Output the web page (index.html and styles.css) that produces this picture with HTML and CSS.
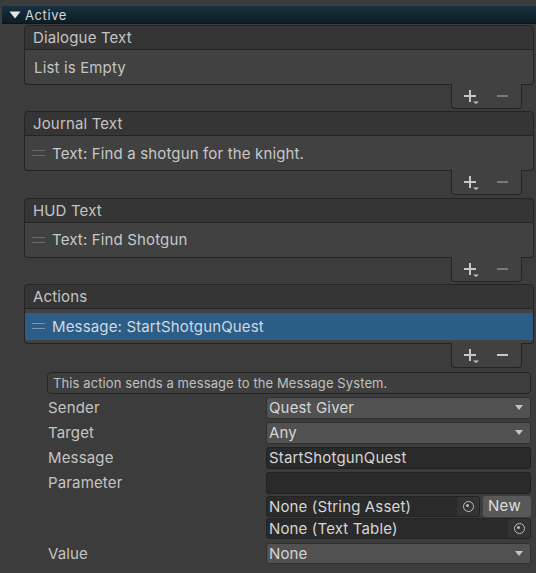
FILE: index.html
```html
<!DOCTYPE html>
<html>
<head>
<meta charset="utf-8">
<link rel="stylesheet" href="styles.css">
</head>
<body>
<div class="panel">
  <div class="foldout">
    <svg class="tri" width="12" height="8" viewBox="0 0 12 8"><path d="M0.5 0.5 L11.5 0.5 L6 7.5 Z" fill="#e6e6e6"/></svg>
    <span class="fold-label">Active</span>
  </div>

  <div class="list">
    <div class="list-head">Dialogue Text</div>
    <div class="list-body"><div class="empty">List is Empty</div></div>
    <div class="list-foot">
      <span class="plus"><svg width="18" height="14" viewBox="0 0 18 14"><rect x="1" y="5" width="12" height="2" fill="#c8c8c8"/><rect x="6" y="0" width="2" height="12" fill="#c8c8c8"/><path d="M10 11.5 L16 11.5 L13 14 Z" fill="#c8c8c8"/></svg></span>
      <span class="minus off"></span>
    </div>
  </div>

  <div class="list">
    <div class="list-head">Journal Text</div>
    <div class="list-body"><div class="item"><span class="handle"></span>Text: Find a shotgun for the knight.</div></div>
    <div class="list-foot">
      <span class="plus"><svg width="18" height="14" viewBox="0 0 18 14"><rect x="1" y="5" width="12" height="2" fill="#c8c8c8"/><rect x="6" y="0" width="2" height="12" fill="#c8c8c8"/><path d="M10 11.5 L16 11.5 L13 14 Z" fill="#c8c8c8"/></svg></span>
      <span class="minus off"></span>
    </div>
  </div>

  <div class="list">
    <div class="list-head">HUD Text</div>
    <div class="list-body"><div class="item"><span class="handle"></span>Text: Find Shotgun</div></div>
    <div class="list-foot">
      <span class="plus"><svg width="18" height="14" viewBox="0 0 18 14"><rect x="1" y="5" width="12" height="2" fill="#c8c8c8"/><rect x="6" y="0" width="2" height="12" fill="#c8c8c8"/><path d="M10 11.5 L16 11.5 L13 14 Z" fill="#c8c8c8"/></svg></span>
      <span class="minus off"></span>
    </div>
  </div>

  <div class="list">
    <div class="list-head">Actions</div>
    <div class="list-body sel-body"><div class="item selected"><span class="handle"></span>Message: StartShotgunQuest</div></div>
    <div class="list-foot">
      <span class="plus"><svg width="18" height="14" viewBox="0 0 18 14"><rect x="1" y="5" width="12" height="2" fill="#c8c8c8"/><rect x="6" y="0" width="2" height="12" fill="#c8c8c8"/><path d="M10 11.5 L16 11.5 L13 14 Z" fill="#c8c8c8"/></svg></span>
      <span class="minus"></span>
    </div>
  </div>

  <div class="details">
    <div class="help">This action sends a message to the Message System.</div>

    <div class="row">
      <div class="label">Sender</div>
      <div class="field dropdown"><span>Quest Giver</span><span class="arrow"></span></div>
    </div>
    <div class="row">
      <div class="label">Target</div>
      <div class="field dropdown"><span>Any</span><span class="arrow"></span></div>
    </div>
    <div class="row">
      <div class="label">Message</div>
      <div class="field text">StartShotgunQuest</div>
    </div>
    <div class="row">
      <div class="label">Parameter</div>
      <div class="field text"></div>
    </div>
    <div class="row obj-row first-obj">
      <div class="label"></div>
      <div class="obj-wrap">
        <div class="field obj"><span>None (String Asset)</span><span class="picker"><span class="ring"></span></span></div>
        <div class="btn-new">New</div>
      </div>
    </div>
    <div class="row obj-row second-obj">
      <div class="label"></div>
      <div class="field obj"><span>None (Text Table)</span><span class="picker"><span class="ring"></span></span></div>
    </div>
    <div class="row value-row">
      <div class="label">Value</div>
      <div class="field dropdown"><span>None</span><span class="arrow"></span></div>
    </div>
  </div>
</div>
</body>
</html>
```

FILE: styles.css
```css
* { box-sizing: border-box; }
html, body { margin: 0; padding: 0; }
body {
  background: #3c3c3c;
  font-family: Inter, "Noto Sans", "DejaVu Sans", sans-serif;
  color: #c4c4c4;
  font-size: 15px;
  width: 536px;
  height: 573px;
  overflow: hidden;
}
.panel { display: flex; flex-direction: column; padding-top: 6px; }

.foldout {
  height: 18px;
  margin-left: 2px;
  background: linear-gradient(#173140, #0d1c25);
  border-bottom: 1px solid #0a141a;
  display: flex;
  align-items: center;
  padding-left: 7px;
}
.tri { display: block; margin-right: 4px; }
.fold-label { font-size: 13px; color: #d4d8da; letter-spacing: 0.6px; line-height: 16px; }

.list { margin: 1px 2px 0 24px; display: flex; flex-direction: column; }
.list + .list { margin-top: 2.33px; }
.list-head {
  height: 25px;
  background: #353535;
  border: 1px solid #242424;
  border-radius: 4px 4px 0 0;
  padding-left: 8px;
  line-height: 23px;
  letter-spacing: 0.15px;
}
.list-body {
  height: 35px;
  background: #414141;
  border: 1px solid #242424;
  border-top: none;
  border-radius: 0 0 4px 4px;
  display: flex;
  flex-direction: column;
  justify-content: center;
}
.empty { padding-left: 9px; letter-spacing: 0.15px; }
.item {
  display: flex;
  align-items: center;
  padding-left: 7px;
  letter-spacing: 0.15px;
  color: #c8c8c8;
}
.handle {
  width: 13px;
  height: 6px;
  border-top: 1px solid #6a6a6a;
  border-bottom: 1px solid #6a6a6a;
  margin-right: 7px;
}
.sel-body { justify-content: flex-start; padding-top: 4px; }
.selected {
  height: 27px;
  background: #2c5d87;
  color: #d0d8e0;
}
.selected .handle { border-color: #7b93a8; }

.list-foot {
  align-self: flex-end;
  margin-right: 12px;
  margin-top: -1px;
  width: 71px;
  height: 25px;
  background: #414141;
  border: 1px solid #242424;
  border-top: none;
  border-radius: 0 0 4px 4px;
  display: flex;
  align-items: flex-start;
  padding-top: 6px;
  padding-left: 11px;
}
.plus { display: block; width: 18px; height: 14px; }
.plus svg { display: block; }
.minus {
  display: block;
  width: 11px;
  height: 2px;
  background: #c8c8c8;
  margin-left: 16px;
  margin-top: 5px;
}
.minus.off { background: #7a7a7a; }

.details { display: flex; flex-direction: column; padding: 4px 5px 0 47px; }
.help {
  height: 22px;
  border: 1px solid #242424;
  border-radius: 4px;
  background: #3e3e3e;
  font-size: 13px;
  line-height: 20px;
  padding-left: 5px;
  letter-spacing: 0.1px;
  color: #c0c0c0;
  margin-bottom: 3px;
}
.row { display: flex; height: 22px; margin-bottom: 3px; align-items: center; }
.label { width: 219px; padding-left: 1px; letter-spacing: 0.15px; flex: none; }
.field {
  flex: 1;
  height: 22px;
  border-radius: 3px;
  display: flex;
  align-items: center;
  padding-left: 2px;
  color: #d6d6d6;
  letter-spacing: 0.15px;
}
.dropdown {
  background: #515151;
  border: 1px solid #303030;
  justify-content: space-between;
  padding-right: 7px;
}
.arrow {
  width: 0; height: 0;
  border-left: 4px solid transparent;
  border-right: 4px solid transparent;
  border-top: 5px solid #c4c4c4;
}
.text {
  background: #2a2a2a;
  border: 1px solid #212121;
}
.obj-row { height: 21px; }
.first-obj { margin-top: -1px; margin-bottom: 1px; }
.second-obj { margin-bottom: 4px; }
.obj-wrap { flex: 1; display: flex; height: 21px; }
.obj {
  height: 21px;
  background: #2a2a2a;
  border: 1px solid #232323;
  justify-content: space-between;
  padding-right: 0;
  border-radius: 3px;
}
.picker {
  width: 22px;
  height: 19px;
  background: #333333;
  border-radius: 2px;
  display: flex;
  align-items: center;
  justify-content: center;
}
.ring {
  width: 11px; height: 11px;
  border: 1.5px solid #bdbdbd;
  border-radius: 50%;
  position: relative;
}
.ring::after {
  content: "";
  position: absolute;
  left: 2.5px; top: 2.5px;
  width: 3px; height: 3px;
  border-radius: 50%;
  background: #bdbdbd;
}
.btn-new {
  width: 48px;
  margin-left: 3px;
  height: 21px;
  background: #585858;
  border-radius: 3px;
  color: #dedede;
  line-height: 20px;
  padding-left: 5px;
  letter-spacing: 0.3px;
}
.value-row .field { height: 21px; }
```
